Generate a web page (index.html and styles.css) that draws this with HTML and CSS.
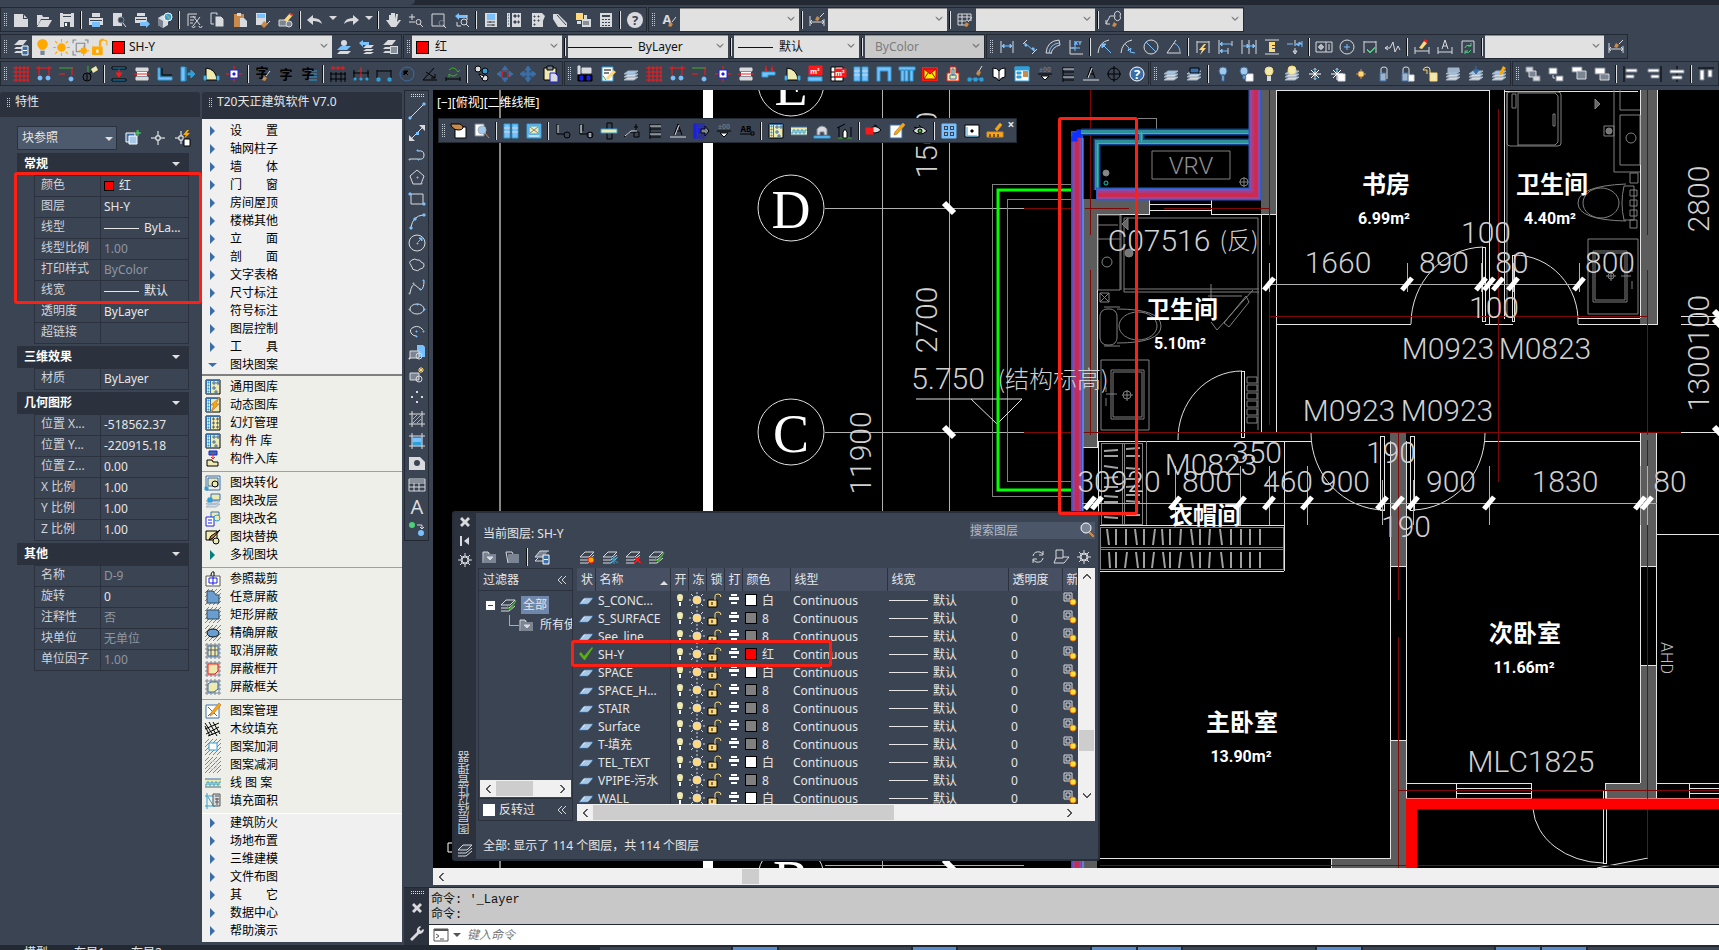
FILE: index.html
```html
<!DOCTYPE html>
<html lang="zh-CN">
  <head>
    <meta charset="utf-8">
    <title>T20天正建筑软件 V7.0</title>
    <link rel="stylesheet" href="styles.css">
  </head>
  <body>
    <div class="file-tabs"><div class="file-tab"></div></div>

    <header class="toolbars">
      <div class="toolbar-row">
        <div class="toolbar">
          <span class="tools" data-icons="new open save | print preview plot publish | cut copy paste match blockedit | undo caret redo caret | pan zoom zoomwin zoomprev | props dcenter palettes sheet markup calc | help"></span>
        </div>
        <div class="toolbar">
          <span class="tools" data-icons="textstyle"></span>
          <label class="combo"><select aria-label="文字样式"><option></option></select></label>
          <span class="tools plain" data-icons="| dimstyle"></span>
          <label class="combo"><select aria-label="标注样式"><option></option></select></label>
          <span class="tools plain" data-icons="| tablestyle"></span>
          <label class="combo"><select aria-label="表格样式"><option></option></select></label>
          <span class="tools plain" data-icons="| leaderstyle"></span>
          <label class="combo"><select aria-label="多重引线样式"><option></option></select></label>
        </div>
      </div>
      <div class="toolbar-row">
        <div class="toolbar">
          <span class="tools" data-icons="layerprops"></span>
          <label class="combo combo-layer">
            <span class="combo-icons" data-glyphs="bulb sun vpfreeze unlock"></span>
            <span class="swatch red"></span>
            <select aria-label="图层"><option>SH-Y</option></select>
          </label>
          <span class="tools plain" data-icons="laycur layprev laystate"></span>
        </div>
        <div class="toolbar">
          <span class="tools" data-icons=""></span>
          <label class="combo combo-color"><span class="swatch red"></span><select aria-label="颜色"><option>红</option></select></label>
          <span class="tools plain" data-icons="|"></span>
          <label class="combo combo-type"><span class="line long"></span><select aria-label="线型"><option>ByLayer</option></select></label>
          <span class="tools plain" data-icons="|"></span>
          <label class="combo combo-weight"><span class="line"></span><select aria-label="线宽"><option>默认</option></select></label>
          <span class="tools plain" data-icons="|"></span>
          <label class="combo disabled"><select aria-label="打印样式" disabled><option>ByColor</option></select></label>
        </div>
        <div class="toolbar">
          <span class="tools" data-icons="dimlin dimali dimarc dimord | dimrad dimjog dimdia dimang | dimquick dimbase dimcont dimspace dimbreak | tol center inspect jogline | dimedit dimtext dimupdate |"></span>
          <label class="combo"><select aria-label="当前标注样式"><option></option></select></label>
          <span class="tools plain" data-icons="dimstyle"></span>
        </div>
      </div>
      <div class="toolbar-row">
        <div class="toolbar">
          <span class="tools" data-icons="grid axis axis2 axisnum | elev wallred corner walledge door column | zibrush zi zilines | dimrow dimrow2 dimrow3 circarrow angle rotate | balls movered move clip"></span>
        </div>
        <div class="toolbar">
          <span class="tools" data-icons="room note layers grid axis axis2 column wallred beam door msq mtable wallwin opening openings mail stamp broom book viewer level stairs roof compass helpblue"></span>
        </div>
        <div class="toolbar">
          <span class="tools" data-icons="layers laydark | bulbblue bulbpage bulbyellow laybulb snow snowpage sunsmall lock lockpage lockyellow laylock laydown layedit"></span>
        </div>
        <div class="toolbar grow">
          <span class="tools" data-icons="front back above below | alignl alignr alignc | distt distt"></span>
        </div>
      </div>
    </header>

    <main class="workspace">
      <section class="panel props">
        <h2 class="panel-title">特性</h2>
        <div class="props-head">
          <span class="select-wrap"><select class="object-type" aria-label="对象类型"><option>块参照</option></select></span>
          <span class="tools plain" data-icons="pickadd pick quickselect"></span>
        </div>
        <div id="props"></div>
        <div class="mark mark-props"></div>
      </section>

      <section class="panel tarch">
        <h2 class="panel-title">T20天正建筑软件 V7.0</h2>
        <nav id="menu" class="menu"></nav>
      </section>

      <div class="stage">
        <div class="stage-top">
          <div class="draw-bar">
            <span class="draw-tools" data-icons="line xline pline polygon rect arc circle cloud spline ellipse earc insert block points hatch gradient region table mtext addsel"></span>
          </div>
          <div class="viewport">
            <div class="canvas">
              <svg class="plan" viewBox="433 90 1286 778" preserveAspectRatio="xMinYMin slice">
                <defs>
                  <path id="slash" d="M-5 6L5 -6" stroke="#fff" stroke-width="5"/>
                  <path id="back" d="M-5 -5L5 5" stroke="#fff" stroke-width="6"/>
                </defs>

                <!-- wall fills -->
                <g class="wall">
                  <path d="M1082 199h67v15h-52v233h-15z"/>
                  <path d="M1261 90h15v124h-15z"/>
                  <path d="M1640 90h17v235h-17z"/>
                  <path d="M1390 432h16v134h-16zM1390 740h16v128h-75v-10h59z"/>
                  <path d="M1640 432h16v134h-16zM1640 665h16v134h-51v-16h35z"/>
                  <path d="M1082 858h15v10h-15z"/>
                </g>

                <!-- sheet edges and dimension chains -->
                <g class="crisp">
                  <path class="gray" stroke-width="2" d="M500 90v778"/>
                  <path stroke="#fff" stroke-width="10" d="M708 90v778"/>
                  <path class="pale" d="M882 90v778M949 90v778M825 208h199M825 432h199M825 865h199"/>
                  <path class="faint" d="M1072 184h-80v312h80M1072 199h-65v282h65M1138 118h18v14"/>
                </g>
                <g class="arc">
                  <circle cx="791" cy="83" r="33"/>
                  <circle cx="791" cy="208" r="33"/>
                  <circle cx="791" cy="432" r="33"/>
                  <circle cx="791" cy="877" r="33"/>
                  <path d="M916 399h106l-25 25l-26-25"/>
                </g>
                <path stroke="#00ff00" stroke-width="3" fill="none" d="M1072 190h-74v300h74"/>

                <!-- walls and windows -->
                <g class="crisp white">
                  <path d="M1097 214v233h-15M1149 199v15h-52M1149 204h62M1149 210h62M1211 199v15h65M1149 199h62"/>
                  <path d="M1276 90v234M1261 214v218M1276 90h213v234M1504 90v229M1504 91h134M1640 90v228M1657 90v235"/>
                  <path d="M1276 324h135M1276 324v108M1485 324h28M1578 324h79M1578 318h62"/>
                  <path d="M1097 441h214M1484 441h156M1098 441v84M1284 441v130M1098 525h186M1098 571h186"/>
                  <path d="M1390 441v417h-290M1406 441v358M1390 566h16M1390 740h16M1331 858v10"/>
                  <path d="M1640 432v351M1656 432v367M1640 566h16M1640 665h16M1656 534h63"/>
                  <path d="M1406 783h125v15h-125M1456 783v15M1456 788h75M1456 793h75M1640 783h-35v15M1656 783h63M1689 783v15M1689 788h30M1689 793h30M1605 798h114"/>
                  <path d="M1482 247h3v74h-3zM1512 255h2v66h-2zM1241 371h3v66h-3zM1380 436h4v74h-4zM1410 436h4v74h-4zM1603 790h3v73h-3z"/>
                  <path d="M1681 316h38M1681 324h38M1681 432h38"/>
                </g>
                <path class="arc" d="M1483 247A74 77 0 0 0 1411 324M1514 255A64 66 0 0 1 1578 324M1242 371A64 68 0 0 0 1178 440M1311 433A74 77 0 0 0 1384 510M1485 433A74 77 0 0 1 1413 510M1533 809A72 58 0 0 0 1603 863M1597 868l51-10"/>

                <!-- red grid axes -->
                <g class="crisp axis">
                  <path d="M1024 208h58M1085 208h44M1164 208h105M1024 432h657M1269 316h378M1398 790h321M1100 865h619"/>
                  <path d="M1090 90v145M1090 270v165M1269 90v155M1269 270v155M1498 109v373M1647 90v145M1647 270v165M1647 440v418M1398 432v168M1398 637v231"/>
                </g>

                <!-- fixtures -->
                <g class="faint fixture">
                  <path d="M1098 215h22v75h-22zM1098 225h20M1098 239h23M1124 218h134v212M1124 218v74M1124 289h135M1124 292h135M1121 215v75"/>
                  <circle cx="1107" cy="262" r="5"/>
                  <circle cx="1129" cy="253" r="4" fill="#777"/>
                  <path d="M1128 218l-6 6l6 6zM1600 104l-5-5v10z" fill="#666"/>
                  <path d="M1100 293h9v9h-9zM1100 293l9 9M1109 293l-9 9"/>
                  <rect x="1100" y="309" width="17" height="36" rx="7"/>
                  <path d="M1117 309q44 0 44 17t-44 17M1104 307h16M1104 346h16"/>
                  <ellipse cx="1138" cy="326" rx="19" ry="14"/>
                  <path d="M1101 360h48v70h-48zM1111 370h33v49h-33zM1113 372h29v45h-29zM1106 394h11M1106 387v5M1106 398v8M1122 395h11M1127 390v11"/>
                  <circle cx="1127" cy="395" r="4"/>
                  <path d="M1253 290l-36 40l-6-8M1249 302l-20 25l-5-4l22-27zM1208 296h34M1211 284v16"/>
                  <path d="M1247 377h10v6h-10zM1247 385h10v6h-10zM1247 393h10v6h-10zM1247 401h10v6h-10zM1247 409h10v6h-10zM1247 417h10v6h-10z"/>
                  <path d="M1152 151h78v28h-78z"/>
                  <circle cx="1106" cy="173" r="3" fill="#888"/>
                  <path d="M1244 177v10M1239 182h10"/><circle cx="1244" cy="182" r="4"/>
                  <rect x="1507" y="92" width="54" height="54" rx="3"/><path d="M1518 93v53M1518 93h37l3 3v46l-3 3h-37M1555 114v12h-2v-12zM1512 94h4v14h-4z"/>
                  <path d="M1507 92v225M1614 90v82h26M1620 90v20h20M1620 115h20v50h-20zM1604 126h10v10h-10z"/>
                  <circle cx="1631" cy="138" r="5"/><circle cx="1609" cy="131" r="3" fill="#777"/>
                  <ellipse cx="1601" cy="203" rx="18" ry="15"/>
                  <path d="M1626 184q-48 2-48 19t48 18M1624 186h10v34h-10q-4-17 0-34zM1630 173h8v10h-8zM1630 190h7v6h-7zM1630 200h7v6h-7zM1630 210h7v6h-7zM1630 220h7v8h-7z"/>
                  <path d="M1588 239h50v75h-50zM1593 251h34v51h-34zM1595 253h30v47h-30zM1606 276h10M1611 271v10M1621 276h10M1632 268v4M1632 281v8"/>
                  <circle cx="1611" cy="276" r="3"/>
                </g>

                <!-- wardrobes with hangers -->
                <g class="faint crisp">
                  <path d="M1100 527h183v42h-183zM1098 547h185M1098 549h185M1101 443h41v81h-41zM1122 443v81M1124 443v81M1146 441v84"/>
                </g>
                <path class="hanger" d="M1107 529l2 16M1116 529l0 16M1126 529l0 16M1135 529l2 16M1144 529l0 16M1155 529l-2 16M1162 529l1 16M1170 529l0 16M1181 529l-1 16M1191 529l2 16M1200 529l0 16M1210 529l-1 16M1220 529l2 16M1231 529l0 16M1241 529l0 16M1250 529l0 16M1260 529l0 16M1109 552l1 16M1116 552l0 16M1127 552l-2 16M1136 552l2 16M1144 552l0 16M1154 552l-2 16M1163 552l2 16M1170 552l0 16M1181 552l-2 16M1191 552l2 16M1200 552l0 16M1210 552l-1 16M1221 552l2 16M1231 552l0 16M1241 552l0 16M1250 552l0 16M1260 552l0 16M1104 451l14-1M1104 456h14M1104 466l14 2M1104 478l14-1M1104 487h14M1104 496l14 1M1104 502h14M1126 449l14-1M1126 456h14M1126 468l14 1M1126 479h14M1126 487l14-1M1126 495h14M1126 501l14 1M1104 517l14 1M1126 515h14"/>

                <!-- selected outline wall and balcony -->
                <g fill="none">
                  <path stroke="#2a4fd0" stroke-width="12" d="M1077 131V868"/>
                  <path stroke="#8f4aa8" stroke-width="9" d="M1077 138V868"/>
                  <path stroke="#c42c58" stroke-width="5" d="M1077 138V868"/>
                  <path stroke="#79b4ff" stroke-width="1" d="M1083 138V868"/>
                  <path stroke="#1030ff" stroke-width="5" d="M1071 139h4v-4h4v-3h6"/>
                  <path stroke="#173f8c" stroke-width="7" d="M1081 132h171M1252 142h-155v48M1141 132v10"/>
                  <path stroke="#2c8f9a" stroke-width="4" d="M1081 132h171M1252 142h-155v48M1141 132v10"/>
                  <path stroke="#00f020" stroke-width="1" class="crisp" d="M1081 133h171M1252 143h-155v47M1141 132v10"/>
                  <path stroke="#2a5fc8" stroke-width="13" d="M1096 194h159V90"/>
                  <path stroke="#8f4aa8" stroke-width="10" d="M1097 194h158V90"/>
                  <path stroke="#cc2a50" stroke-width="6" d="M1098 194h157V90"/>
                  <path stroke="#8f4aa8" stroke-width="1" d="M1098 192h155V90"/>
                  <circle stroke="#00d0c0" cx="1106" cy="183" r="2"/>
                </g>
                <path stroke="#ff0000" stroke-width="11" fill="none" d="M1719 804h-307.5v64"/>

                <!-- dimension lines -->
                <path class="crisp pale" d="M1269 284h311M1082 503h575M1269 263v29M1407 263v29M1481 263v29M1513 263v29M1579 263v29M1175 466v59M1240 466v59M1269 466v59M1307 466v59M1382 480v45M1413 480v45M1489 466v59M1640 466v59M1647 466v59"/>
                <use href="#back" x="949" y="208"/><use href="#back" x="949" y="432"/><use href="#back" x="949" y="865"/>
                <use href="#slash" x="1269" y="284"/><use href="#slash" x="1407" y="284"/><use href="#slash" x="1481" y="284"/><use href="#slash" x="1489" y="284"/><use href="#slash" x="1498" y="284"/><use href="#slash" x="1513" y="284"/><use href="#slash" x="1579" y="284"/>
                <use href="#slash" x="1090" y="503"/><use href="#slash" x="1097" y="503"/><use href="#slash" x="1175" y="503"/><use href="#slash" x="1240" y="503"/><use href="#slash" x="1269" y="503"/><use href="#slash" x="1307" y="503"/><use href="#slash" x="1382" y="503"/><use href="#slash" x="1398" y="503"/><use href="#slash" x="1413" y="503"/><use href="#slash" x="1489" y="503"/><use href="#slash" x="1640" y="503"/><use href="#slash" x="1647" y="503"/>
                <use href="#back" x="1719" y="316"/><use href="#back" x="1719" y="324"/><use href="#back" x="1719" y="432"/>

                <g class="axis-name">
                  <text x="791" y="105">E</text>
                  <text x="791" y="228">D</text>
                  <text x="791" y="452">C</text>
                  <text x="791" y="898">B</text>
                </g>
                <g class="dim">
                  <text x="1338" y="273">1660</text>
                  <text x="1444" y="273">890</text>
                  <text x="1512" y="273">80</text>
                  <text x="1610" y="273">800</text>
                  <text x="1486" y="243">100</text>
                  <text x="1494" y="318">100</text>
                  <text x="1448" y="359">M0923</text>
                  <text x="1545" y="359">M0823</text>
                  <text x="1349" y="421">M0923</text>
                  <text x="1447" y="421">M0923</text>
                  <text x="1211" y="475">M0823</text>
                  <text x="1257" y="463">350</text>
                  <text x="1391" y="463">190</text>
                  <text x="1119" y="492">30920</text>
                  <text x="1207" y="492">800</text>
                  <text x="1288" y="492">460</text>
                  <text x="1345" y="492">900</text>
                  <text x="1451" y="492">900</text>
                  <text x="1565" y="492">1830</text>
                  <text x="1670" y="492">80</text>
                  <text x="1406" y="537">190</text>
                  <text x="1531" y="772">MLC1825</text>
                  <text x="1159" y="251">C07516</text>
                  <text x="948" y="389">5.750</text>
                  <text transform="translate(937 145) rotate(-90)">1500</text>
                  <text transform="translate(937 320) rotate(-90)">2700</text>
                  <text transform="translate(871 453) rotate(-90)">11900</text>
                  <text transform="translate(1709 199) rotate(-90)">2800</text>
                  <text transform="translate(1709 353) rotate(-90)">1300100</text>
                </g>
                <g class="dim cjk">
                  <text x="1239" y="249">(反)</text>
                  <text x="1053" y="388">(结构标高)</text>
                </g>
                <text class="vrv" x="1191" y="174">VRV</text>
                <text class="ahd" transform="translate(1661 658) rotate(90)">AHD</text>
                <g class="room">
                  <text x="1386" y="193">书房</text>
                  <text x="1552" y="193">卫生间</text>
                  <text x="1182" y="318">卫生间</text>
                  <text x="1205" y="524">衣帽间</text>
                  <text x="1242" y="731">主卧室</text>
                  <text x="1525" y="642">次卧室</text>
                </g>
                <g class="area">
                  <text x="1384" y="224">6.99m²</text>
                  <text x="1550" y="224">4.40m²</text>
                  <text x="1180" y="349">5.10m²</text>
                  <text x="1241" y="762">13.90m²</text>
                  <text x="1524" y="673">11.66m²</text>
                </g>
                <path stroke="#fff" fill="none" d="M452 843h-4v9h4"/>
              </svg>

              <div class="view-label">[−][俯视][二维线框]</div>

              <div class="toolbar float-bar">
                <span class="tools" data-icons="hand magnify | wallwin winbox | leadk leadk2 beamy leader stairs roof doorblue level ab | lib wave arch house | eyered notepad eye | squares boxdot ruler"></span>
                <button class="close" aria-label="关闭">×</button>
              </div>
              <div class="mark mark-wall"></div>

              <section class="palette">
                <div class="palette-side">
                  <button aria-label="关闭" data-icon="close"></button>
                  <button aria-label="自动隐藏" data-icon="autohide"></button>
                  <button aria-label="设置" data-icon="gear"></button>
                  <h3>图层特性管理器</h3>
                  <span data-icon="stack"></span>
                </div>
                <div class="palette-body">
                  <div class="palette-top">
                    <p>当前图层: SH-Y</p>
                    <label class="search"><input type="text" placeholder="搜索图层" aria-label="搜索图层"><span data-icon="search"></span></label>
                  </div>
                  <div class="palette-tools">
                    <span class="tools plain" data-icons="folderfilter folder | laystate2"></span>
                    <span class="tools plain layer-tools" data-icons="laynew layfreeze laydel laycheck"></span>
                    <span class="tools plain" data-icons="refresh override gear"></span>
                  </div>
                  <div class="palette-main">
                    <div class="filters">
                      <div class="filters-head">过滤器<span data-icon="collapse"></span></div>
                      <div class="tree">
                        <div class="tree-node"><span class="expander"></span><span data-icon="laycheck"></span><b>全部</b></div>
                        <div class="tree-node child"><span data-icon="folderfilter"></span>所有使用的图层</div>
                      </div>
                      <div class="hscroll"><span data-icon="left"></span><i class="thumb"></i><span data-icon="right"></span></div>
                      <div class="invert"><input type="checkbox" id="invert"><label for="invert">反转过</label><span data-icon="collapse"></span></div>
                    </div>
                    <div class="layers">
                      <div class="layers-view">
                        <div class="layers-clip">
                          <table>
                            <colgroup>
                              <col class="c-state"><col class="c-name"><col class="c-flag"><col class="c-flag"><col class="c-flag"><col class="c-flag"><col class="c-color"><col class="c-type"><col class="c-weight"><col class="c-trans"><col>
                            </colgroup>
                            <thead>
                              <tr><th>状</th><th class="sorted">名称</th><th>开</th><th>冻</th><th>锁</th><th>打</th><th>颜色</th><th>线型</th><th>线宽</th><th>透明度</th><th>新</th></tr>
                            </thead>
                            <tbody id="layers"></tbody>
                          </table>
                        </div>
                        <div class="vscroll"><span data-icon="up"></span><i class="thumb"></i><span data-icon="down"></span></div>
                      </div>
                      <div class="hscroll wide"><span data-icon="left"></span><i class="thumb"></i><span data-icon="right"></span></div>
                    </div>
                  </div>
                  <p class="palette-status">全部: 显示了 114 个图层，共 114 个图层</p>
                </div>
                <div class="mark mark-row"></div>
              </section>
            </div>
            <div class="hscroll canvas-scroll"><span data-icon="left"></span><i class="thumb"></i></div>
          </div>
        </div>

        <div class="command">
          <div class="command-side">
            <i class="grip-h"></i>
            <button aria-label="关闭" data-icon="close"></button>
            <button aria-label="自定义" data-icon="wrench"></button>
          </div>
          <div class="command-body">
            <pre>命令: '_Layer
命令:</pre>
            <label class="command-line"><span data-icon="prompt"></span><span data-icon="caretgray"></span><input type="text" placeholder="键入命令" aria-label="键入命令"></label>
          </div>
        </div>
      </div>
    </main>

    <footer class="status">
      <div class="layout-tabs"><span>模型</span><span>布局1</span><span>布局2</span></div>
      <div class="status-keys"><i></i><i class="on"></i><i></i><i class="on"></i><i></i><i class="on"></i><i class="on"></i><i></i><i class="on"></i><i></i><i class="on"></i><i class="on"></i><i></i></div>
    </footer>

    <script src="app.js"></script>
  </body>
</html>
```

FILE: styles.css
```css
* {
  box-sizing: border-box;
}

body {
  margin: 0;
  height: 100vh;
  display: flex;
  flex-direction: column;
  overflow: hidden;
  background: #3b4453;
  color: #e6e6e6;
  font-family: "Noto Sans", "Noto Sans CJK SC", sans-serif;
  font-size: 12px;
  line-height: 18px;
}

button {
  border: 0;
  padding: 0;
  background: none;
  color: inherit;
  font: inherit;
}

select,
input {
  font: inherit;
  color: inherit;
}

h2,
h3,
p,
pre {
  margin: 0;
  font-size: 12px;
  font-weight: normal;
}

.icon {
  width: 16px;
  height: 16px;
  display: block;
  flex: none;
  overflow: visible;
}

/* characters inside icons */
.glyph {
  font: bold 13px "Noto Sans", "Noto Sans CJK SC", sans-serif;
  text-anchor: middle;
}

.glyph.tiny {
  font-size: 7px;
}

.glyph.small {
  font-size: 8px;
}

.glyph.big {
  font-size: 20px;
  font-weight: normal;
}

/* top strip */
.file-tabs {
  height: 5px;
  flex: none;
  background: #222933;
}

.file-tab {
  width: 415px;
  height: 5px;
  background: #3b4453;
  border-radius: 0 0 8px 0;
}

/* toolbars */
.toolbars {
  flex: none;
  display: flex;
  flex-direction: column;
  gap: 2px;
  padding-top: 2px;
  padding-bottom: 4px;
}

.toolbar-row {
  display: flex;
  gap: 1px;
  overflow: hidden;
}

.toolbar {
  height: 25px;
  display: flex;
  align-items: center;
  flex: none;
  border: 1px solid #222933;
}

.toolbar.grow {
  flex: 1;
  overflow: hidden;
}

.tools {
  display: flex;
  align-items: center;
  flex: none;
}

.tools::before {
  content: "";
  width: 4px;
  height: 14px;
  margin-left: 2px;
  margin-right: 2px;
  background: conic-gradient(#c4cad3 90deg, transparent 0) 0 0 / 2px 2px;
}

.tools.plain::before {
  display: none;
}

.tool {
  width: 23px;
  height: 22px;
  display: flex;
  align-items: center;
  justify-content: center;
}

.tool.narrow {
  width: 13px;
}

.sep {
  width: 2px;
  height: 18px;
  margin: 0 2px;
  background: #e0e0e0;
  border-left: 1px solid #111;
}

.combo {
  position: relative;
  display: flex;
  align-items: center;
  gap: 6px;
  width: 119px;
  height: 23px;
  padding-left: 4px;
  background: #e1e1e1;
  border-top: 1px solid #8c8c8c;
  color: #111;
}

.combo select {
  flex: 1;
  min-width: 0;
  appearance: none;
  border: 0;
  background: none;
}

.combo .icon {
  width: 17px;
  height: 17px;
}

.combo .chevron {
  position: absolute;
  right: 2px;
  top: 4px;
  width: 12px;
  height: 12px;
  pointer-events: none;
}

.combo-icons {
  display: flex;
  gap: 2px;
}

.combo-layer {
  width: 300px;
  gap: 4px;
  padding-left: 2px;
}

.combo-color {
  width: 150px;
}

.combo-type {
  width: 160px;
  padding-left: 0;
}

.combo-weight {
  width: 125px;
}

.combo.disabled {
  background: #c9c9c9;
  color: #7c7c7c;
  padding-left: 10px;
}

.combo.disabled select {
  opacity: 1;
}

.swatch {
  width: 12px;
  height: 12px;
  flex: none;
  border: 1px solid #000;
  background: #808080;
}

.combo .swatch {
  width: 13px;
  height: 13px;
}

.swatch.red {
  background: #ff0000;
}

.swatch.white {
  background: #fff;
}

.line {
  width: 35px;
  height: 1px;
  background: currentColor;
  flex: none;
}

.line.long {
  width: 64px;
}

/* work area */
.workspace {
  flex: 1;
  min-height: 0;
  display: flex;
}

.panel {
  width: 200px;
  flex: none;
  margin: 2px 2px 3px 0;
  display: flex;
  flex-direction: column;
}

.panel-title {
  height: 25px;
  padding-left: 15px;
  line-height: 20px;
  position: relative;
  background: #2b313d;
  border-radius: 3px 3px 0 0;
}

.panel-title::before {
  content: "";
  position: absolute;
  left: 6px;
  top: 6px;
  width: 4px;
  height: 10px;
  background: conic-gradient(#c4cad3 90deg, transparent 0) 0 0 / 2px 2px;
}

/* property palette */
.props {
  position: relative;
}

.props-head {
  display: flex;
  align-items: center;
  gap: 4px;
  padding: 9px 0 3px 17px;
}

.props-head .tools {
  gap: 2px;
}

.object-type {
  width: 100px;
  height: 24px;
  padding: 0 4px;
  display: block;
  appearance: none;
  border: 1px solid #2b313d;
  background: #4d5a6e;
}

.select-wrap {
  position: relative;
}

.select-wrap::after,
.prop-head::after,
.sorted::after {
  content: "";
  border: 4px solid transparent;
  border-top-color: #e0e0e0;
  border-bottom: 0;
}

.select-wrap::after {
  position: absolute;
  right: 4px;
  top: 11px;
}

.prop-head {
  display: flex;
  align-items: center;
  justify-content: space-between;
  margin: 0 11px 0 17px;
  padding: 0 9px 0 7px;
  height: 22px;
  background: #2b313d;
  color: #fff;
  font-weight: bold;
}

.prop-table {
  width: 155px;
  margin: 0 0 2px 34px;
  border-collapse: collapse;
  table-layout: fixed;
}

.prop-table th,
.prop-table td {
  height: 21px;
  padding: 0 2px 2px 6px;
  border: 1px solid #2b313d;
  font-weight: normal;
  text-align: left;
  white-space: nowrap;
  overflow: hidden;
  line-height: 18px;
}

.prop-table th {
  width: 66px;
  color: #d0d3d8;
}

.prop-table td {
  padding: 0 2px 0 3px;
}

.prop-table td.off {
  color: #8f96a1;
}

.cell {
  display: flex;
  align-items: center;
  gap: 5px;
}

.cell .swatch {
  width: 10px;
  height: 10px;
}

.layers .cell .swatch {
  width: 12px;
  height: 12px;
}

.mark {
  position: absolute;
  border: 3px solid #ff2015;
  border-radius: 3px;
  pointer-events: none;
}

.mark-props {
  left: 14px;
  top: 80px;
  width: 188px;
  height: 132px;
}

/* screen menu */
.tarch .panel-title {
  height: 27px;
}

.menu {
  flex: 1;
  min-height: 0;
  overflow: hidden;
  padding-top: 3px;
  background: #f0f0f0;
  color: #000;
}

.menu ul {
  margin: 0;
  padding: 0;
  list-style: none;
}

.menu ul.sub {
  background: #efefea;
  border-top: 2px solid #808080;
  padding: 2px 0 3px;
}

.menu ul.sub + ul.sub {
  border-top: 1px solid #a0a0a0;
}

.menu ul.sub + ul.top {
  border-top: 1px solid #fff;
}

.menu button {
  width: 100%;
  height: 18px;
  display: flex;
  align-items: center;
  gap: 9px;
  padding-left: 3px;
  white-space: pre;
  text-align: left;
}

/* draw toolbar */
.stage {
  flex: 1;
  min-width: 0;
  display: flex;
  flex-direction: column;
}

.stage-top {
  flex: 1;
  min-height: 0;
  display: flex;
  gap: 4px;
}

.draw-bar {
  width: 25px;
  align-self: flex-start;
  padding-top: 3px;
  border: 1px solid #222933;
}

.draw-bar::before,
.grip-h {
  content: "";
  display: block;
  width: 14px;
  height: 4px;
  margin: 0 auto 2px;
  background: conic-gradient(#d8dce2 90deg, transparent 0) 0 0 / 2px 2px;
}

.draw-tools {
  display: block;
}

/* drawing area */
.viewport {
  flex: 1;
  min-width: 0;
  display: flex;
  flex-direction: column;
}

.canvas {
  flex: 1;
  min-height: 0;
  position: relative;
  overflow: hidden;
  background: #000;
}

.plan {
  width: 100%;
  height: 100%;
  display: block;
}

.plan .crisp {
  shape-rendering: crispEdges;
  fill: none;
}

.plan .wall {
  fill: #5c5c5c;
}

.plan .white {
  stroke: #e4e4e4;
}

.plan .pale {
  stroke: #b0b0b0;
}

.plan .gray {
  stroke: #8a8580;
}

.plan .faint {
  stroke: #808080;
  fill: none;
}

.plan .hanger {
  stroke: #a0a0a0;
  stroke-width: 2;
  fill: none;
}

.plan .axis {
  stroke: #7c0808;
}

.plan .arc {
  stroke: #e0e0e0;
  fill: none;
}

.plan text {
  text-anchor: middle;
}

.axis-name {
  font: 54px "Liberation Serif", serif;
  fill: #fff;
}

.dim {
  font: 300 30px "Roboto", sans-serif;
  fill: #d0d0d0;
}

.dim.cjk {
  font: 300 24px "Noto Sans CJK SC", sans-serif;
}

.vrv {
  font: 300 24px "Roboto", sans-serif;
  fill: #909090;
}

.ahd {
  font: 300 16px "Roboto", sans-serif;
  fill: #c0c0c0;
}

.room {
  font: bold 24px "Noto Sans CJK SC", sans-serif;
  fill: #fff;
}

.area {
  font: bold 16px "Roboto", "Noto Sans CJK SC", sans-serif;
  fill: #fff;
}

.view-label {
  position: absolute;
  left: 4px;
  top: 4px;
  color: #fff;
}

.float-bar {
  position: absolute;
  left: 5px;
  top: 28px;
  background: #3b4453;
}

.close {
  width: 10px;
  align-self: flex-start;
  line-height: 12px;
  font-weight: bold;
}

.mark-wall {
  left: 625px;
  top: 27px;
  width: 80px;
  height: 398px;
  z-index: 2;
}

/* layer palette */
.palette {
  position: absolute;
  left: 19px;
  top: 421px;
  width: 648px;
  height: 350px;
  display: flex;
  background: #3b4453;
  border: 2px solid #272e39;
  border-radius: 3px;
}

.palette-side {
  width: 22px;
  display: flex;
  flex-direction: column;
  align-items: center;
  gap: 3px;
  padding: 1px 0;
  background: #2b313d;
}

.palette-side h3 {
  writing-mode: vertical-rl;
  transform: rotate(180deg);
  margin-top: auto;
  margin-bottom: 4px;
  color: #d0d3d8;
}

.palette-body {
  flex: 1;
  min-width: 0;
  display: flex;
  flex-direction: column;
  padding: 0 3px 0 2px;
}

.palette-top {
  display: flex;
  justify-content: space-between;
  padding: 8px 0 0 5px;
}

.palette-top p {
  line-height: 25px;
}

.search {
  display: flex;
  width: 125px;
  height: 17px;
  margin-top: 1px;
  background: #4b5769;
}

.search input {
  flex: 1;
  min-width: 0;
  padding: 0;
  border: 0;
  background: none;
}

input::placeholder {
  color: #b4bac4;
  opacity: 1;
}

.palette-tools {
  display: flex;
  align-items: center;
  height: 22px;
}

.palette-tools .layer-tools {
  margin-left: 22px;
  margin-right: auto;
}

.palette-main {
  display: flex;
  gap: 4px;
  height: 253px;
}

.filters {
  width: 95px;
  display: flex;
  flex-direction: column;
  border: 1px solid #2b313d;
}

.filters-head,
.invert {
  display: flex;
  align-items: center;
  height: 22px;
  padding: 0 2px 0 4px;
}

.filters-head {
  border-bottom: 1px solid #2b313d;
}

.filters-head span,
.invert span {
  margin-left: auto;
}

.tree {
  flex: 1;
  min-height: 0;
  padding: 4px 0 0 7px;
  overflow: hidden;
}

.tree-node {
  display: flex;
  align-items: center;
  gap: 5px;
  height: 20px;
  white-space: nowrap;
}

.tree-node b {
  padding: 0 2px;
  background: #6f87ab;
  font-weight: normal;
}

.tree-node.child {
  margin-left: 23px;
  padding-left: 10px;
  background: linear-gradient(#aaa, #aaa) no-repeat 0 0 / 1px 10px, linear-gradient(#aaa, #aaa) no-repeat 0 10px / 10px 1px;
}

.expander {
  width: 9px;
  height: 9px;
  border: 1px solid #fff;
  background: linear-gradient(#244a7c, #244a7c) no-repeat center / 5px 1px #fff;
}

.invert {
  border-top: 1px solid #2b313d;
}

.invert input {
  appearance: none;
  width: 12px;
  height: 12px;
  margin: 0 4px 0 0;
  background: #fff;
}

.hscroll,
.vscroll {
  display: flex;
  align-items: center;
  background: #f0f0f0;
}

.hscroll {
  height: 17px;
  flex: none;
}

.hscroll .thumb {
  height: 15px;
  background: #cdcdcd;
}

.hscroll span:last-child {
  margin-left: auto;
}

.filters .hscroll {
  margin: 0 1px 1px;
}

.filters .thumb {
  width: 37px;
}

.wide .thumb {
  width: 301px;
}

.wide span:last-child {
  margin-right: 17px;
}

.canvas-scroll .thumb {
  width: 17px;
  margin-left: 293px;
}

.vscroll {
  width: 17px;
  flex-direction: column;
  justify-content: space-between;
}

.vscroll .thumb {
  width: 15px;
  height: 21px;
  margin-top: 108px;
  background: #cdcdcd;
}

.layers {
  flex: 1;
  min-width: 0;
}

.layers-view {
  display: flex;
  height: 236px;
}

.layers-clip {
  flex: 1;
  min-width: 0;
  overflow: hidden;
}

.layers table {
  width: 100%;
  border-collapse: collapse;
  table-layout: fixed;
}

.layers th {
  height: 23px;
  padding: 0 0 0 4px;
  overflow: hidden;
  white-space: nowrap;
  text-align: left;
  font-weight: normal;
  background: #474f63;
  border-right: 1px solid #2b313d;
}

.layers td {
  height: 18px;
  padding: 0 0 0 1px;
  overflow: hidden;
  white-space: nowrap;
  line-height: 17px;
}

.layers td:nth-child(2) {
  padding-left: 3px;
  border-right: 1px solid #2b313d;
}

.layers td:nth-child(7),
.layers td:nth-child(8),
.layers td:nth-child(10) {
  padding-left: 3px;
}

.layers .line {
  width: 39px;
}

.layers td:nth-child(9) {
  padding-left: 2px;
}

.sorted::after {
  float: right;
  margin: 10px 2px 0 0;
  transform: rotate(180deg);
}

.c-state,
.c-flag {
  width: 18px;
}

.c-name {
  width: 75px;
}

.c-color {
  width: 48px;
}

.c-type {
  width: 97px;
}

.c-weight {
  width: 121px;
}

.c-trans {
  width: 54px;
}

.palette-status {
  padding: 16px 0 0 5px;
}

.mark-row {
  left: 117px;
  top: 127px;
  width: 261px;
  height: 27px;
}

/* command line */
.command {
  display: flex;
  height: 58px;
  margin-top: 2px;
  border-top: 1px solid #222933;
}

.command-side {
  width: 25px;
  padding-top: 3px;
  display: flex;
  flex-direction: column;
  align-items: center;
  gap: 3px;
  background: #2b313d;
}

.command-side button:last-child {
  margin-top: 6px;
}

.command-body {
  flex: 1;
  display: flex;
  flex-direction: column;
}

.command pre {
  flex: 1;
  padding: 5px 2px 0;
  background: #c8c8c8;
  border-bottom: 1px solid #222933;
  color: #111;
  font-family: "Liberation Mono", "Noto Sans CJK SC", monospace;
  line-height: 15px;
}

.command-line {
  display: flex;
  align-items: center;
  height: 20px;
  padding-left: 4px;
  background: #fff;
  color: #555;
}

.command-line input {
  flex: 1;
  padding: 0 0 0 2px;
  border: 0;
  font-style: italic;
}

.command-line input::placeholder {
  color: #777;
}

/* status strip */
.status {
  height: 5px;
  flex: none;
  display: flex;
  overflow: hidden;
  background: #222933;
  line-height: 16px;
}

.layout-tabs {
  width: 600px;
  padding-left: 24px;
  display: flex;
  gap: 26px;
}

.status-keys {
  flex: 1;
  display: flex;
  gap: 2px;
  padding-top: 2px;
}

.status-keys i {
  flex: 3;
  background: #3b4453;
}

.status-keys i.on {
  flex: 1;
  background: #5b8cc8;
}
```

FILE: app.js
```js
// stroke / fill colour keys used in the icon strings below
const colors = {
  n: 'none', g: '#d9dade', b: '#79c0ff', r: '#ff1818', k: '#000', y: '#ffd978', w: '#fff',
  o: '#ffa800', d: '#7b8492', c: '#2f9fd8', v: '#1a20e0', e: '#4cd07a', m: '#a4c8e6',
  l: '#efeab0', s: '#9fb4c8', h: '#3b4453', x: '#c98b4a', a: '#3a6ea8', z: '#3fae2a', q: '#555'
};

const LAYERS = 'sg M1 11l4-3h10l-4 3zM1 14l4-3h10l-4 3z|sm M1 8l4-3h10l-4 3z';
const STACK = 'gn M1 14h8l6-5M1 11h8l6-5|gh M1 8l5-5h9l-5 5z';
const DIMH = 'gn M2 2v12M14 2v12';
const HATCH = 'dn M0 4l4-4M0 8l8-8M0 12L12 0M0 16L16 0M4 16L16 4M8 16l8-8M12 16l4-4';
const WEAVE = 'dn M2 0v16M6 0v16M10 0v16M14 0v16M0 2h16M0 6h16M0 10h16M0 14h16';
const BRUSH = 'gn M15 5l-4 5|nx M7 14l2-4l3 2l-2 3z';
const BALL = 'bb M2 12a2 2 0 1 0 4 0a2 2 0 1 0-4 0M10 12a2 2 0 1 0 4 0a2 2 0 1 0-4 0';
const LIBRARY = 'kl M1 1h14v14H1z|na M1 1h14v1H1zM1 1h1v14H1zM5 2h1v13H5z|ca M3 3h1v1H3zM3 6h1v1H3zM3 9h1v1H3zM3 12h1v1H3z';

// each icon: shapes split by "|", "<stroke><fill> <path data>"
const icons = {
  new: 'ng M1 2h9l5 5v8H1z|nh M10 2l5 5h-5z|ng M11 3v3h3z',
  open: 'ng M1 3h5l1 2h6v2H5l-3 6H1z|ng M5 8h11l-4 7H1z',
  save: 'ng M1 1h14v14H1z|nh M4 1h8v1H4zM4 4h8v1H4zM5 10h6v5H5z|nw M6 11h2v3H6z',
  print: 'ng M4 1h8v4H4zM1 6h14v7H1z|nh M2 8h12v1H2z|nb M4 10h8v5H4z',
  preview: 'ng M2 1h9v13H2z|dh M7 8a3 3 0 1 0 6 0a3 3 0 1 0-6 0|gn M12 11l3 4',
  plot: 'ng M3 1h8v3H3zM1 5h12v6H1z|nh M2 7h10v1H2z|nb M6 10h6v-2l4 4l-4 4v-2H6z',
  publish: 'ng M1 6l5-3l5 3v7l-5 3l-5-3z|nd M1 6l5 3v7l-5-3z|wc M7 5a4 4 0 1 0 8 0a4 4 0 1 0-8 0|on M9 3q3 1 4 5',
  cut: 'gn M2 2h9M2 2v12M4 5h6M4 8h4M4 11h3M7 4l7 9M14 5l-7 9|gn M6 14a1 1 0 1 0 3 0M13 14a1 1 0 1 0 3 0',
  copy: 'gn M2 1h6v2M2 1v11h3|hg M6 4h6l3 3v8H6z',
  paste: 'nx M2 2h10v13H2z|ng M5 1h4v3H5zM8 6h4l3 3v6H8z',
  match: 'ng M1 1h10v12H1z|nb M2 2h8v4H2z|gn M15 9l-3 3|nx M6 13l3-4l4 3l-4 4z',
  blockedit: 'gd M1 8h8v6H1z|gd M8 12a3 3 0 1 0 6 0a3 3 0 1 0-6 0|ny M6 8l6-7l3 2l-6 7z|nr M12 1l3 2l-1 1l-3-2z',
  undo: 'ng M0 8l6-5v3q8 0 9 6q-3-3-9-3v4z',
  redo: 'ng M16 8l-6-5v3q-8 0-9 6q3-3 9-3v4z',
  caret: 'ng M4 4h8l-4 4z',
  caretgray: 'nq M4 6h8l-4 4z',
  pan: 'ng M4 8V3h2v4V1h2v6V1h2v6l1-5h2l-1 8l2-2h2l-5 7H6L1 8h2z',
  zoom: 'gn M1 5h6M4 2v6M1 10h6M8 10a2.500 2.500 0 1 0 5 0a2.500 2.500 0 1 0-5 0M12 12l3 3',
  zoomwin: 'gn M1 2h12v12H1z|dh M8 11a2.500 2.500 0 1 0 5 0a2.500 2.500 0 1 0-5 0|gn M12 13l3 3',
  zoomprev: 'nb M1 4l4-3v2h8v3H5v2z|gn M3 10v4h4M13 3v5|gh M7 10a3 3 0 1 0 6 0a3 3 0 1 0-6 0|gn M12 12l3 3',
  props: 'ng M2 1h12v14H2z|nb M4 2h8v6H4z|hn M4 10h8M4 13h8M7 9v2M10 12v2',
  dcenter: 'ng M1 1h3v14H1zM6 1h9v14H6z|hh M8 3h2v2H8zM12 3h1v2h-1zM8 9h2v2H8zM12 9h1v2h-1z|hn M2 3h1M2 6h1M2 9h1M2 12h1',
  palettes: 'ng M3 1h10l3 3l-2 5v6H3z|hh M5 4h1v1H5zM9 4h1v1H9zM5 8h1v1H5zM9 8h1v1H9zM5 12h1v1H5z',
  sheet: 'ng M1 2h5l9 9v4H6l-5-8z|hn M5 3l9 10',
  markup: 'ny M1 1h7v7H1z|ng M9 3h3v4H9zM7 7h9v8H7zM2 9h4v3H2z|hn M8 10h6M8 12h6',
  calc: 'ng M2 1h12v14H2z|nh M4 3h8v2H4zM4 7h2v1H4zM7 7h2v1H7zM10 7h2v1h-2zM4 10h2v1H4zM7 10h2v1H7zM10 10h2v1h-2zM4 13h2v1H4zM7 13h2v1H7zM10 13h2v1h-2z',
  help: 'ng M0 8a8 8 0 1 0 16 0a8 8 0 1 0-16 0|<text x="8" y="13" class="glyph" fill="#3b4453">?</text>',
  helpblue: 'wa M1 8a7 7 0 1 0 14 0a7 7 0 1 0-14 0|<text x="8" y="13" class="glyph" fill="#fff">?</text>',
  textstyle: '<text x="6" y="12" class="glyph" fill="#d9dade">A</text>|' + BRUSH,
  dimstyle: 'gn M1 4v10M15 7v7M1 10h14M3 8l-2 2l2 2M13 8l2 2l-2 2|gn M15 1l-4 4|nx M6 8l2-4l3 2l-2 3z',
  tablestyle: 'gn M1 2h13v11H1zM1 5h13M1 9h13M5 2v11M10 2v11|nh M9 9h7v7H9z|' + BRUSH,
  leaderstyle: 'gn M1 12l4-8h4M10 4a3 3 0 1 0 5 0a3 3 0 1 0-5 0M1 8v4h4|nx M7 14l2-4l3 2l-2 3z',
  layerprops: 'ng M1 6l5-5h8l-4 5zM1 10l2-2h8l-2 2zM1 14l2-2h7v2z|wa M9 7h6v9H9z|nw M10 11h4v1h-4z',
  bulb: 'no M3 5a5 5 0 1 1 10 0q0 2-3 5H6q-3-3-3-5|nd M6 11h4v4H6z',
  sun: 'no M4 8a4 4 0 1 0 8 0a4 4 0 1 0-8 0|on M8 0v3M8 13v3M0 8h3M13 8h3M2 2l2 2M12 12l2 2M14 2l-2 2M4 12l-2 2',
  vpfreeze: 'dn M1 4V1h3M12 1h3v3M1 11v4h3M4 4h8v5M4 4v8h4|no M8 11a3 3 0 1 0 6 0a3 3 0 1 0-6 0|on M11 6v10M6 11h10',
  unlock: 'no M1 7h10v8H1z|on M9 7V3q0-2 3-2t3 2v3M8 7V3q0-3 4-3|nw M5 10h2v3H5z',
  laycur: 'ng M1 15l3-3h11l-3 3z|nb M1 11l4-4h10l-4 4z|ng M5 4a3 3 0 1 0 6 0a3 3 0 1 0-6 0',
  layprev: 'ng M4 15l3-2h8l-3 2zM4 12l3-2h8l-3 2zM4 9l3-3h8l-3 3z|nb M0 4l4-3v2h6v3H4v2z',
  laystate: 'ng M1 6l5-5h8l-4 5zM1 10l2-2h5v2zM1 14l2-2h5v2z|ng M8 7h8v8H8z|hn M9 9h6M9 11h6M9 13h6',
  laystate2: 'nd M1 8l5-6h8l-4 6z|gn M1 8h8M1 12h8M1 8l5-6h9M1 12l3-3|wa M9 6h6v9H9z|nw M10 10h4v1h-4z',
  dimlin: DIMH + '|bb M3 7l2-2v4zM13 7l-2-2v4zM3 7h10',
  dimali: 'gn M1 5l4-4M10 15l5-5|bb M3 4l9 8M3 4v3h2zM12 12v-3h-2z',
  dimarc: 'gn M1 14Q2 2 14 1M6 15Q7 8 15 6M1 14h5M14 1l1 5|bn M4 14Q5 5 14 4',
  dimord: 'gn M2 1v14h13M2 9h4|bn M7 3v9M4 9h8|<text x="10" y="6" class="glyph tiny" fill="#79c0ff">xʏ</text>',
  dimrad: 'gn M1 14Q2 3 12 1|bb M5 5l9 9M5 5h4l-4 4z',
  dimjog: 'gn M1 14Q2 3 12 1|bn M5 5l4 4l-1 3l3-3l-1 4l5 1',
  dimdia: 'gn M1 8a7 7 0 1 0 14 0a7 7 0 1 0-14 0|bn M3 3l10 10',
  dimang: 'gn M10 1L1 14h14|bn M8 4q6 3 6 9',
  dimquick: DIMH + 'M2 3h12|ny M9 5l-5 6h3l-2 5l6-7H8l3-4z',
  dimbase: 'gn M1 1v14M14 2v5M10 9v6|bb M2 5h12M2 12h8M2 12l2-2v4zM2 5l2-2v4z',
  dimcont: 'gn M1 1v14M8 1v14M15 1v14|bb M2 7h12M6 5l2 2l-2 2zM14 7l-2-2v4z',
  dimspace: 'gn M1 1h14M1 15h14|ny M5 3h6v3H8v1h3v2H8v1h3v3H5z',
  dimbreak: 'gn M8 9v6M6 12l2 3l2-3z|bb M0 5h6M15 2v6M9 5h6l-3-2v4z|gn M8 1v6',
  tol: 'gn M0 3h16v10H0zM10 3v10M2 8h6M5 5v6M3 8a2 2 0 1 0 4 0a2 2 0 1 0-4 0M13 5v6',
  center: 'gn M1 8a7 7 0 1 0 14 0a7 7 0 1 0-14 0|bn M8 5v6M5 8h6',
  inspect: DIMH + 'M2 3h12|en M5 11l3 3l5-5M5 10l3 3l5-5',
  jogline: 'gn M0 9h5l3-6l2 10l3-6l2 4M3 7L0 9l3 2',
  dimedit: 'gn M1 8v7M15 8v7M1 12h14|ny M5 9l5-7l3 2l-5 6z|nr M10 2l1-2l3 2l-1 2z',
  dimtext: 'gn M1 8v7M15 8v7M1 13h14M5 10l3-9l3 9M6 7h4',
  dimupdate: DIMH + 'M2 2h12|en M5 9q1-4 6-2M11 4v3H8M11 11q-2 4-6 2M5 15v-3h3',
  grid: 'rn M3 0v16M7 0v16M11 0v16M15 0v16M0 2h16M0 6h16M0 10h16M0 14h16',
  axis: 'rn M0 2h16M3 0v9M13 0v9|' + BALL,
  axis2: 'zn M0 2h14|rn M0 8h6M13 2v7|bb M10 13a2 2 0 1 0 4 0a2 2 0 1 0-4 0',
  axisnum: 'zn M6 0v6|kn M1 11a4 4 0 1 0 8 0a4 4 0 1 0-8 0M5 8v6M7 8l6-5|nl M9 3l5-3l2 4l-5 3z',
  elev: 'kc M1 1h14v2H1zM1 13h14v2H1z|rr M8 3v8M5 7l3 4l3-4z',
  wallred: 'gg M2 2h12v3H2zM2 11h12v3H2z|rn M0 8h16|nw M3 6h10v4H3z|rn M2 8h12',
  corner: 'cb M1 2h2v9h12v3H1z|kn M5 2v7h10',
  walledge: 'cb M1 1h4v14H1z|cc M8 7h3V4l4 4l-4 4V9H8z|cn M6 1v14',
  door: 'kl M3 14V2Q13 3 14 14z|cb M1 10h2v4H1zM14 10h2v4h-2z',
  column: 'rn M8 0v16M0 8h16|vw M4 4h8v8H4z|vv M7 7h2v2H7z',
  zi: '<text x="8" y="13" class="glyph" fill="#000">字</text>',
  zibrush: '<text x="7" y="11" class="glyph" fill="#000">字</text>|' + BRUSH,
  zilines: 'cn M8 5h8M8 8h8M8 11h8M8 14h8|<text x="7" y="12" class="glyph" fill="#000">字</text>',
  dimrow: 'rn M1 2h14M3 0v4M8 0v4M13 0v4|kn M1 6v10M6 6v10M11 6v10M15 6v10M0 8h16M0 13h16',
  dimrow2: 'kn M1 4v10M15 4v10M0 7h16|rn M8 1v10M5 6l3-3|cc M1 12h2v2H1zM7 12h2v2H7zM13 12h2v2h-2z',
  dimrow3: 'kn M1 4v8M15 4v8M1 5h14|cc M1 12h3v3H1zM12 12h3v3h-3z',
  circarrow: 'an M1 8a7 7 0 1 0 14 0a7 7 0 1 0-14 0|kk M5 5l4 4M5 5h4l-4 4z',
  angle: 'kn M12 2L1 14h14M4 6l9 6M13 8v4h-4',
  rotate: 'zn M4 4q5-5 9 2l2-2M12 8q-4 4-8 0M4 8v3|kn M1 11v4M15 11v4M1 13h14',
  balls: 'kg M1 3a3 3 0 1 0 6 0a3 3 0 1 0-6 0M8 12a3 3 0 1 0 6 0a3 3 0 1 0-6 0|kc M8 5a3 3 0 1 0 6 0a3 3 0 1 0-6 0|kw M5 8l5 2l-2 3z',
  move: 'aa M8 0l3 4H9v3h3V5l4 3l-4 3V9H9v3h2l-3 4l-3-4h2V9H4v2L0 8l4-3v2h3V4H5z',
  movered: 'aa M8 0l3 4H5zM16 8l-4-3v6zM8 16l-3-4h6zM0 8l4-3v6z|rn M5 12V8a3 3 0 0 1 6 0v3',
  clip: 'kl M1 2h12v12H1z|kd M4 0h6v4H4z|vg M7 7h5l3 3v6H7z',
  room: 'gg M1 0h2v8H1zM5 2h9v5H5z|kk M1 9h14v6H1z|vv M3 10h3v4H3zM10 10h3v4h-3z',
  note: 'cw M2 1h11v14H2z|kn M4 4h7M4 7h5|ny M6 12l7-8l3 2l-8 8z|zn M3 10l3 4',
  layers: LAYERS,
  laydark: LAYERS + '|ka M4 2h9v5H4z',
  beam: 'cb M1 6h13v3h-7v2H1z|rr M5 0v4M11 0v4M4 3l1 2l1-2zM10 3l1 2l1-2z',
  msq: 'rr M2 0h13v9H2z|cb M1 11h14v4H1z|<text x="8" y="8" class="glyph tiny" fill="#fff">m²</text>',
  mtable: 'kw M1 1h12v14H1z|kn M1 6h12M1 11h12M5 1v14|rr M5 3h11v8H5z|<text x="10" y="10" class="glyph tiny" fill="#fff">m²</text>',
  wallwin: 'cb M1 1h6v14H1zM9 1h6v14H9z|gn M1 5h6M1 9h6M9 5h6M9 9h6',
  opening: 'cb M1 1h14v14h-3V5H4v10H1z',
  openings: 'cb M0 1h16v3H0zM2 4h3v11H2zM6 4h3v11H6zM11 4h3v11h-3z',
  mail: 'nr M0 1h16v14H0z|<path fill="#f6f000" stroke="#b01010" d="M2 3h12v10H2zM2 3l6 5l6-5M2 13l4-6M14 13l-4-6"/>',
  stamp: 'rl M2 7h3V1h6v6h3v8H2z|an M5 9h6v4H5zM7 3h2v6H7z',
  broom: 'cc M0 12h3v3H0zM6 12h3v3H6zM12 12h3v3h-3z|cn M1 13h13|gn M14 0l-3 5|nx M8 8l2-4l3 2l-2 4z',
  book: 'kw M2 2q4 0 6 3q2-3 6-3v9q-4 0-6 4q-2-4-6-4z|kn M8 5v10',
  viewer: 'cw M1 1h14v14H1z|cc M1 1h14v3H1zM3 6h4v2H3zM3 10h4v2H3z|nx M9 5h5v6H9z',
  level: '<text x="8" y="6" class="glyph tiny" fill="#6a7280">±00</text>|kn M1 8h14|kw M4 10h8l-4 4z',
  stairs: 'kn M3 1v15M3 2h11M3 6h11M3 10h11M3 14h11|gn M3 3h11M3 11h11',
  roof: 'kn M4 12l4-11l4 11M5 8h6|gn M5 12l4-10M0 14h16',
  compass: 'kn M2 8a6 6 0 1 0 12 0a6 6 0 1 0-12 0M8 0v16M1 8h14',
  bulbblue: 'am M4 5a4 4 0 1 1 8 0q0 2-2 4H6q-2-2-2-4M7 9h2v6H7z',
  bulbpage: 'gw M8 8h7v7H8z|am M2 5a4 4 0 1 1 8 0q0 2-2 4H4q-2-2-2-4M5 9h2v4H5z',
  bulbyellow: 'yl M4 5a4 4 0 1 1 8 0q0 2-2 4H6q-2-2-2-4|ng M6 10h4v5H6z',
  laybulb: LAYERS + '|yl M4 4a4 4 0 1 1 8 0q0 2-2 4H6q-2-2-2-4',
  snow: 'wn M8 2v12M2 8h12M4 4l8 8M12 4l-8 8|cn M6 3l2 2l2-2M6 13l2-2l2 2',
  snowpage: 'gw M8 8h7v7H8z|wn M7 2v12M1 8h12M3 4l8 8M11 4l-8 8|cn M5 3l2 2l2-2',
  sunsmall: 'xy M5 8a3 3 0 1 0 6 0a3 3 0 1 0-6 0|xn M8 3v2M8 11v2M3 8h2M11 8h2',
  lock: 'as M4 7h6v8H4z|gn M5 7V3q0-2 3-2t3 2v10',
  lockpage: 'gw M9 9h6v6H9z|as M3 7h6v8H3z|gn M4 7V3q0-2 3-2t3 2v6',
  lockyellow: 'yl M8 7h7v8H8z|yn M8 8V4q0-3-3-3T1 4h4v4',
  laylock: LAYERS + '|ss M3 2h11v4H3z',
  laydown: LAYERS + '|aa M8 0v4M5 4h6l-3 4z',
  layedit: LAYERS + '|no M8 8l4-8l3 2l-5 7z',
  front: 'dg M1 1h7v5H1zM8 10h7v5H8z|gd M4 5h7v6H4z',
  back: 'dw M1 2h8v6H1zM8 10h7v5H8z|gn M5 9v3h2',
  above: 'dw M1 1h10v5H1z|gd M6 5h9v8H6z',
  below: 'gd M6 8h9v6H6z|dw M1 2h10v6H1z',
  alignl: 'kn M1 0v16|dw M3 3h11v3H3zM3 9h8v3H3z',
  alignr: 'kn M15 0v16|dw M2 3h11v3H2zM5 9h8v3H5z',
  alignc: 'kn M8 0v16|dw M1 4h14v3H1zM3 10h10v3H3z',
  distt: 'kn M0 2h16|dw M2 4h4v10H2zM10 4h4v7h-4z',
  pickadd: 'wa M1 3h9v9H1z|wm M4 6h8v8H4z|zz M10 3h5M12 0v6|en M13 0v6M10 3h6',
  pick: 'wn M8 1v5M8 10v5M1 8h5M10 8h5M6 6h4v4H6z',
  quickselect: 'wn M6 1v5M6 10v4M0 8h4M4 6h4v4H4z|no M12 0l-4 5h3l-2 4l6-6h-3l2-3z|kw M9 9h6v7H9z',
  line: 'gn M2 14L14 2|bb M0 14h2v2H0zM14 0h2v2h-2z',
  xline: 'gn M2 14L14 2|ng M0 16v-6l6 6zM16 0v6l-6-6z|nb M7 7h3v3H7z',
  pline: 'gn M1 12h8M9 4q6-1 6 4t-5 4|bb M0 12h1v1H0zM9 12h1v1H9zM8 3h1v1H8z',
  polygon: 'gn M8 1l7 6l-3 8H4L1 7z|bb M8 8h1v1H8zM12 14h1v1h-1z',
  rect: 'gn M2 3h12v10H2z|bb M0 2h2v2H0zM14 12h2v2h-2z',
  arc: 'gn M2 14Q4 3 14 2|bb M1 14h2v2H1zM5 5h2v2H5zM14 1h2v2h-2z',
  circle: 'gn M0 8a8 8 0 1 0 16 0a8 8 0 1 0-16 0|bb M8 8h1v1H8zM9 7l4-4M10 3h3v3z',
  cloud: 'gn M2 8q-3-3 1-5q3-2 5 0q3-1 4 2q4 1 3 4t-4 3q-2 3-5 1q-3 0-3-3q-1-1-1-2',
  spline: 'gn M1 14Q3 4 6 6l6 5q3-2 3-9|bb M0 14h1v1H0zM4 4h1v1H4zM11 10h1v1h-1zM14 1h1v1h-1z',
  ellipse: 'gn M1 8a7 5 0 1 0 14 0a7 5 0 1 0-14 0|bb M0 8h1v1H0zM8 3h1v1H8zM15 8h1v1h-1z',
  earc: 'gn M14 7Q10 2 5 4T2 10q2 3 5 3|bb M7 8h1v1H7zM14 8h1v1h-1zM7 13h1v1H7z',
  insert: 'nb M8 0h6l2 2v10H8z|gd M1 6h9v7H1z|gn M7 11a3 3 0 1 0 6 0a3 3 0 1 0-6 0|gg M0 13h1v1H0z',
  block: 'gd M1 6h9v7H1z|gn M7 12a3 3 0 1 0 6 0a3 3 0 1 0-6 0|yy M12 0v6M9 3h6M10 1l4 4M14 1l-4 4',
  points: 'ng M7 2h2v2H7zM2 7h2v2H2zM12 7h2v2h-2zM7 12h2v2H7z',
  hatch: 'gn M0 3h16M0 13h16M3 0v16M13 0v16|bn M4 8l4-4M4 12l8-8M8 12l4-4',
  gradient: 'ac M3 4h10v9H3z|nb M4 5h8v4H4z|gn M0 3h16M0 13h16M3 0v16M13 0v16',
  region: 'ng M0 2h11l5 5v8H0z|nh M5 8a3 3 0 1 0 6 0a3 3 0 1 0-6 0',
  table: 'gn M0 2h16v12H0zM0 6h16M0 10h16M5 6v8M10 6v8M0 4h16',
  mtext: '<text x="8" y="15" class="glyph big" fill="#d9dade">A</text>',
  addsel: 'ne M0 4a3 3 0 1 0 6 0a3 3 0 1 0-6 0|nb M9 12a3 3 0 1 0 6 0a3 3 0 1 0-6 0|gn M8 4h5v4M11 6l2 2l2-2',
  hand: 'kw M4 4h11v11H4z|kx M0 1h9q4 2 3 4t-4 2Q4 8 0 3z',
  magnify: 'dw M1 1h9v12H1z|sm M4 7a4 4 0 1 0 8 0a4 4 0 1 0-8 0|xn M11 10l4 5',
  winbox: 'cb M1 1h14v14H1z|cl M3 3h10v8H3z|dn M4 4l8 6M12 4l-8 6|wn M3 13h10',
  leadk: 'kn M2 1v10h7M9 12a3 3 0 1 0 6 0a3 3 0 1 0-6 0|gn M3 2v8',
  leadk2: 'kn M2 1v10h7M5 1v7M9 12a3 3 0 1 0 6 0a3 3 0 1 0-6 0|wn M3 2v8M12 10v4',
  beamy: 'kn M6 0h5v16H6z|cl M0 6h16v4H0z',
  leader: 'kn M0 14l6-5h6M12 1v8M10 4h4M10 9h5v5h-5z|gn M1 13l6-5h6',
  doorblue: 'vn M1 1h10v14H1zM3 3h6v10H3z|vv M1 1h2v14H1zM5 5h2v6H5z|kd M8 6h4V3l4 5l-4 5v-3H8z',
  ab: '<text x="7" y="9" class="glyph small" fill="#000">AB</text>|kn M1 11h11M12 9h3v3h-3z',
  lib: LIBRARY + '|an M8 3h2v2H8zM12 3h2v2h-2zM8 8h2v2H8zM10 12h2v2h-2z',
  libdyn: LIBRARY + '|xo M14 1L6 8h3l-3 7l8-8h-3z',
  libslide: LIBRARY + '|qy M8 3h1v2H8zM12 3h1v2h-1zM8 7h1v2H8zM12 7h1v2h-1zM8 11h1v2H8zM12 11h1v2h-1z',
  into: 'va M4 0h8v4H4z|rn M8 3v5M6 6l2 2l2-2|kl M2 9h5l1 2h5v4H2z',
  blkconv: 'al M3 3h10v8H3z|kl M7 9a3 3 0 1 0 6 0a3 3 0 1 0-6 0|an M1 1h14v14H1z|cc M0 12h3v3H0z',
  blklayer: LAYERS + '|al M6 1h9v6H6z|cc M3 5h4v4H3z',
  blkname: 'al M6 1h8v6H6z|vw M1 6h8v9H1z|vn M3 9h4M3 12h4|cl M9 7a3 3 0 1 0 6 0a3 3 0 1 0-6 0',
  blkswap: 'kl M1 2h11v9H1z|kl M8 12a3 3 0 1 0 6 0a3 3 0 1 0-6 0|kx M15 1l-7 8l-4 2l2-4z',
  refclip: 'qw M1 5h14v10H1z|vn M4 7h8v5H4zM8 5v9|kn M6 5q0-5 3-4v4',
  maskany: HATCH + '|<path fill="#6a9ed0" stroke="#30485c" d="M2 2h6l3 4h3v8H2z"/>',
  maskrect: HATCH + '|<path fill="#6a9ed0" stroke="#30485c" d="M2 3h12v9H2z"/>',
  maskell: HATCH + '|<path fill="#6a9ed0" stroke="#000" d="M2 8a6 4 0 1 0 12 0a6 4 0 1 0-12 0"/>',
  maskoff: WEAVE + '|al M3 3h10v10H3z|qn M6 3v10M10 3v10M3 7h10',
  frameon: WEAVE + '|rl M3 3h10v7l-3 3H3z',
  frameoff: WEAVE + '|al M3 5l3-2h7v7l-4 3H3z',
  hatchman: 'aw M1 2h13v13H1z|an M3 4l9 9M12 4l-9 9|xo M14 0L6 10l-1 3l3-2l8-9z',
  wood: 'kn M0 2l8 12M4 1l8 14M8 1l7 12M0 8l14-6M1 13L14 6M3 15l12-5M0 5l5 10',
  hatchadd: HATCH + '|cw M4 4h8v7H4z',
  hatchsub: HATCH + '|gn M4 8a4 4 0 1 0 8 0a4 4 0 1 0-8 0',
  wave: 'nl M0 4h16v8H0z|an M0 4h16M0 12h16|cn M0 10h2V7h2v3h2V7h2v3h2V7h2v3h2V7h2',
  hatcharea: 'cn M2 0v16M0 3h10M0 13h10M3 4l5 8|qg M8 1h7v12H8z|qn M10 3h4M10 6h4M10 9h4M12 5v7',
  more: '<path fill="#008080" d="M5 3l5 5l-5 5z"/>',
  arrow: 'na M5 3l5 5l-5 5z',
  arrowdown: 'na M3 6h9l-4.500 4z',
  arch: 'cb M0 13h16v2H0z|dg M3 12V6q5-6 10 0v6h-3V9H6v3z',
  house: 'kn M2 4v11M14 4v11M0 5l8-4|zn M1 15h14|kw M6 15V9l2-3l2 3v6z',
  eye: 'kg M1 8q7-8 14 0q-7 6-14 0|kz M6 8a2 2 0 1 0 4 0a2 2 0 1 0-4 0|kn M2 4l3 1M7 2l2 2',
  eyered: 'kg M3 7q6-7 12 0q-6 6-12 0|rr M0 5h7v6H0z|kn M8 2l3 1',
  notepad: 'aw M1 2h12v13H1z|xo M14 0L6 9l-1 3l3-1l8-9z',
  squares: 'bb M1 1h14v14H1z|nh M3 3h4v4H3zM9 3h4v4H9zM3 9h4v4H3zM9 9h4v4H9z|nb M4 4h2v2H4zM10 4h2v2h-2zM4 10h2v2H4zM10 10h2v2h-2z',
  boxdot: 'kw M1 2h14v12H1z|kk M7 7h2v2H7z|cn M3 4v9h10',
  ruler: 'xo M0 9h16v5H0z|kn M3 11v3M7 11v3M11 11v3|xo M8 6l5-6l2 2l-5 6z',
  close: 'ng M3 5l2-2l3 3l3-3l2 2l-3 3l3 3l-2 2l-3-3l-3 3l-2-2l3-3z',
  autohide: 'ng M3 3h2v10H3zM12 4v8L7 8z',
  gear: 'gn M5 8a3 3 0 1 0 6 0a3 3 0 1 0-6 0M8 1v3M8 12v3M1 8h3M12 8h3M3 3l2 2M11 11l2 2M13 3l-2 2M5 11l-2 2M4 8a4 4 0 1 0 8 0a4 4 0 1 0-8 0',
  stack: STACK,
  search: 'wd M2 6a5 5 0 1 0 10 0a5 5 0 1 0-10 0|xx M11 10l4 4l-1 1l-4-4z',
  folderfilter: 'nd M1 3h6l1 2h6v9H2z|gn M1 14V3h5l1 2|gg M5 8h6l-3 3z',
  folder: 'nd M3 5h11v9H3z|gn M1 3h6l1 2M1 3l2 11',
  laynew: STACK + '|ro M9 11a3 3 0 1 0 6 0a3 3 0 1 0-6 0',
  layfreeze: STACK + '|cn M12 6v9M8 8l8 6M16 8l-8 6',
  laydel: STACK + '|rn M9 8l6 6M15 8l-6 6M10 8l6 6M15 9l-6 6',
  laycheck: STACK + '|zn M7 9l3 3l6-9M7 10l3 3l6-9',
  refresh: 'gn M3 7q1-5 7-4l3 2M13 2v4H9M13 9q-1 5-7 4l-3-2M3 14v-4h4',
  override: 'gn M3 1h7v8H3zM3 9l-2 5h10l5-6h-6',
  collapse: 'gn M8 4L4 8l4 4M12 4L8 8l4 4',
  left: 'qn M10 4L6 8l4 4M11 4L7 8l4 4',
  right: 'qn M6 4l4 4l-4 4M5 4l4 4l-4 4',
  up: 'qn M4 10l4-4l4 4M4 11l4-4l4 4',
  down: 'qn M4 6l4 4l4-4M4 5l4 4l4-4',
  wrench: 'ng M1 14l7-7q-1-4 3-6l1 1l-2 2l2 2l2-2l1 1q-1 4-5 4l-7 7z',
  prompt: 'qw M1 2h14v12H1z|nq M1 2h14v2H1z|qn M3 7l3 2l-3 2M7 12h4',
  tick: '<path fill="#58b010" d="M1 8l2-2l3 4l8-9l1 1l-8 12H6z"/>',
  sheetrow: 'aw M1 12l5-6h9l-5 6z|nm M3 11l4-4h7l-4 4z',
  bulbrow: 'nl M5 5a3 3 0 1 1 6 0q0 2-1 4H6q-1-2-1-4|nw M7 10h2v4H7z',
  sunrow: 'gy M4 8a4 4 0 1 0 8 0a4 4 0 1 0-8 0|gn M8 0v2M8 14v2M0 8h2M14 8h2M2 2l2 2M12 12l2 2M14 2l-2 2M4 12l-2 2',
  lockrow: 'ky M1 8h9v7H1z|yn M8 8V4q0-2 3-2t3 3|kn M5 10v3',
  printrow: 'nw M6 2h6v2H6zM4 5h10v3H4zM6 10h6v2H6z',
  vprow: 'gn M1 1h8v8H1zM3 3h4v4H3z|<path fill="#ffe040" stroke="#f08000" d="M7 10a3 3 0 1 0 6 0a3 3 0 1 0-6 0"/>'
};

function icon(name, cls = '') {
  const shapes = icons[name].split('|').map(part => {
    if (part[0] === '<') return part;
    return `<path stroke="${colors[part[0]]}" fill="${colors[part[1]]}" d="${part.slice(3)}"/>`;
  });
  return `<svg class="icon ${cls}" viewBox="0 0 16 16" aria-hidden="true">${shapes.join('')}</svg>`;
}

document.querySelectorAll('[data-icons]').forEach(bar => {
  bar.innerHTML = bar.dataset.icons.split(' ').filter(Boolean).map(name => {
    if (name === '|') return '<i class="sep"></i>';
    return `<button class="tool${name === 'caret' ? ' narrow' : ''}" aria-label="${name}">${icon(name)}</button>`;
  }).join('');
});

document.querySelectorAll('[data-glyphs]').forEach(el => {
  el.innerHTML = el.dataset.glyphs.split(' ').map(name => icon(name)).join('');
});

document.querySelectorAll('[data-icon]').forEach(el => {
  el.innerHTML = icon(el.dataset.icon);
});

document.querySelectorAll('.combo').forEach(combo => {
  combo.insertAdjacentHTML('beforeend', icon('down', 'chevron'));
});

// property groups: [label, value, state]
const groups = [
  ['常规', [
    ['颜色', '<div class="cell"><span class="swatch red"></span>红</div>'],
    ['图层', 'SH-Y'],
    ['线型', '<div class="cell"><span class="line"></span>ByLa...</div>'],
    ['线型比例', '1.00', 'off'],
    ['打印样式', 'ByColor', 'off'],
    ['线宽', '<div class="cell"><span class="line"></span>默认</div>'],
    ['透明度', 'ByLayer'],
    ['超链接', '']
  ]],
  ['三维效果', [['材质', 'ByLayer']]],
  ['几何图形', [
    ['位置 X...', '-518562.37'],
    ['位置 Y...', '-220915.18'],
    ['位置 Z...', '0.00'],
    ['X 比例', '1.00'],
    ['Y 比例', '1.00'],
    ['Z 比例', '1.00']
  ]],
  ['其他', [
    ['名称', 'D-9', 'off'],
    ['旋转', '0'],
    ['注释性', '否', 'off'],
    ['块单位', '无单位', 'off'],
    ['单位因子', '1.00', 'off']
  ]]
];

document.getElementById('props').innerHTML = groups.map(([title, rows]) =>
  `<div class="prop-head">${title}</div><table class="prop-table">` +
  rows.map(([k, v, s = '']) => `<tr><th scope="row">${k}</th><td class="${s}">${v}</td></tr>`).join('') +
  '</table>'
).join('');

const menu = [
  ['top', ['arrow:设　　置', 'arrow:轴网柱子', 'arrow:墙　　体', 'arrow:门　　窗', 'arrow:房间屋顶', 'arrow:楼梯其他', 'arrow:立　　面', 'arrow:剖　　面', 'arrow:文字表格', 'arrow:尺寸标注', 'arrow:符号标注', 'arrow:图层控制', 'arrow:工　　具', 'arrowdown:图块图案']],
  ['sub', ['lib:通用图库', 'libdyn:动态图库', 'libslide:幻灯管理', 'lib:构 件 库', 'into:构件入库']],
  ['sub', ['blkconv:图块转化', 'blklayer:图块改层', 'blkname:图块改名', 'blkswap:图块替换', 'more:多视图块']],
  ['sub', ['refclip:参照裁剪', 'maskany:任意屏蔽', 'maskrect:矩形屏蔽', 'maskell:精确屏蔽', 'maskoff:取消屏蔽', 'frameon:屏蔽框开', 'frameoff:屏蔽框关']],
  ['sub', ['hatchman:图案管理', 'wood:木纹填充', 'hatchadd:图案加洞', 'hatchsub:图案减洞', 'wave:线 图 案', 'hatcharea:填充面积']],
  ['top', ['arrow:建筑防火', 'arrow:场地布置', 'arrow:三维建模', 'arrow:文件布图', 'arrow:其　　它', 'arrow:数据中心', 'arrow:帮助演示']]
];

document.getElementById('menu').innerHTML = menu.map(([cls, items]) =>
  `<ul class="${cls}">` + items.map(item => {
    const [name, text] = item.split(':');
    return `<li><button>${icon(name)}${text}</button></li>`;
  }).join('') + '</ul>'
).join('');

const layers = [
  ['S_CONC...', '白'], ['S_SURFACE', '8'], ['See_line', '8'], ['SH-Y', '红'],
  ['SPACE', '白'], ['SPACE_H...', '8'], ['STAIR', '8'], ['Surface', '8'],
  ['T-填充', '8'], ['TEL_TEXT', '白'], ['VPIPE-污水', '8'], ['WALL', '白']
];
const swatches = { '白': 'white', '红': 'red', '8': '' };

document.getElementById('layers').innerHTML = layers.map(([name, color]) => `
  <tr>
    <td>${icon(name === 'SH-Y' ? 'tick' : 'sheetrow')}</td>
    <td>${name}</td>
    <td>${icon('bulbrow')}</td>
    <td>${icon('sunrow')}</td>
    <td>${icon('lockrow')}</td>
    <td>${icon('printrow')}</td>
    <td><div class="cell"><span class="swatch ${swatches[color]}"></span>${color}</div></td>
    <td>Continuous</td>
    <td><div class="cell"><span class="line"></span>默认</div></td>
    <td>0</td>
    <td>${icon('vprow')}</td>
  </tr>`).join('');
```
